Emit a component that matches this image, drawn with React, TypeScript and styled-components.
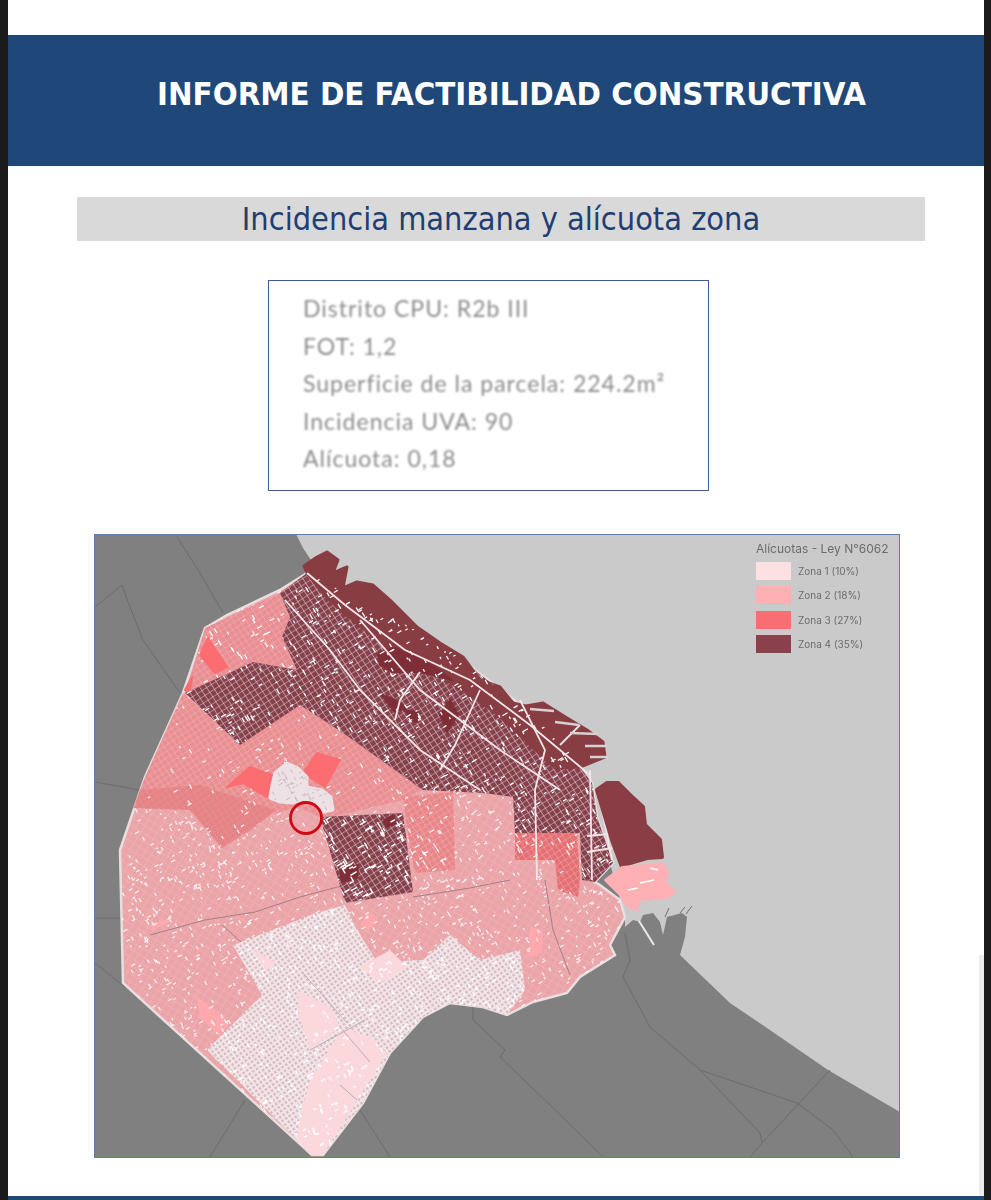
import styled, { createGlobalStyle } from "styled-components";

const GlobalStyle = createGlobalStyle`
  html, body {
    margin: 0;
    padding: 0;
    background: #1b1b1b;
  }
`;

const Sheet = styled.div`
  position: relative;
  margin: 0 7px 0 8px;
  width: 976px;
  height: 1200px;
  background: #fff;
  padding-top: 35px;
  box-sizing: border-box;
  overflow: hidden;
`;

const Banner = styled.header`
  height: 131px;
  background: #1f4778;
  display: flex;
  align-items: center;
  padding-left: 149px;
  padding-bottom: 13px;
  box-sizing: border-box;
`;

const Title = styled.h1`
  margin: 0;
  font-family: "DejaVu Sans", sans-serif;
  font-stretch: condensed;
  font-size: 32.7px;
  font-weight: 700;
  color: #fff;
  white-space: nowrap;
`;

const SectionBar = styled.div`
  margin: 31px 59px 0 69px;
  height: 44px;
  background: #d9d9d9;
  display: flex;
  align-items: center;
  justify-content: center;
`;

const SectionTitle = styled.h2`
  margin: 0;
  font-family: "DejaVu Sans", sans-serif;
  font-stretch: condensed;
  font-size: 32.2px;
  font-weight: 400;
  color: #1f3f73;
  white-space: nowrap;
`;

const InfoBox = styled.div`
  margin: 39px 0 0 260px;
  width: 441px;
  height: 211px;
  box-sizing: border-box;
  border: 1.5px solid #3d5c88;
  padding: 9px 0 0 34px;
`;

const InfoLine = styled.div`
  height: 37.5px;
  line-height: 37.5px;
  font-family: Lato, sans-serif;
  font-size: 23px;
  letter-spacing: 1px;
  color: #8c8c8c;
  filter: blur(0.8px);
  white-space: nowrap;
`;

const MapFrame = styled.figure`
  position: relative;
  margin: 43px 0 0 86px;
  width: 806px;
  height: 624px;
  box-sizing: border-box;
  border: 1px solid #5f7ea6;
  background: #cacaca;
  overflow: hidden;
`;

const MapSvg = styled.svg`
  display: block;
  width: 806px;
  height: 624px;
  margin: -1px;
`;

const Legend = styled.div`
  position: absolute;
  top: 7px;
  right: 7px;
  width: 136px;
  filter: blur(0.4px);
  font-family: Inter, sans-serif;
  color: #6c6c6c;
`;

const LegendTitle = styled.div`
  font-size: 12px;
  line-height: 14px;
  margin-bottom: 3px;
  white-space: nowrap;
`;

const LegendRow = styled.div`
  display: flex;
  align-items: center;
  gap: 7px;
  height: 24.3px;
  font-size: 10px;
  white-space: nowrap;
`;

const Swatch = styled.span<{ $color: string }>`
  flex: none;
  width: 35px;
  height: 18px;
  background: ${(p) => p.$color};
`;

const ScrollEdge = styled.div`
  position: absolute;
  top: 955px;
  right: 0;
  width: 5px;
  bottom: 0;
  background: #ececec;
`;

const BottomStrip = styled.div`
  position: absolute;
  left: 0;
  right: 0;
  bottom: 0;
  height: 4px;
  background: #1f4778;
`;

type Pt = [number, number];

const toPoints = (pts: Pt[]) => pts.map((p) => p.join(",")).join(" ");

// simple seeded random so the specks stay the same between renders
const makeRandom = (seed: number) => () => {
  seed = (seed * 1664525 + 1013904223) % 4294967296;
  return seed / 4294967296;
};

const makeSpecks = (pts: Pt[], count: number, seed: number, lenMin: number, lenMax: number) => {
  const rnd = makeRandom(seed);
  const xs = pts.map((p) => p[0]);
  const ys = pts.map((p) => p[1]);
  const x0 = Math.min(...xs);
  const y0 = Math.min(...ys);
  const w = Math.max(...xs) - x0;
  const h = Math.max(...ys) - y0;
  let d = "";
  for (let i = 0; i < count; i++) {
    const x = x0 + rnd() * w;
    const y = y0 + rnd() * h;
    const len = lenMin + rnd() * (lenMax - lenMin);
    const horizontal = rnd() > 0.5;
    const dx = horizontal ? len * 0.85 : len * 0.5;
    const dy = horizontal ? -len * 0.5 : len * 0.85;
    d += `M${x.toFixed(1)} ${y.toFixed(1)}l${dx.toFixed(1)} ${dy.toFixed(1)}`;
  }
  return d;
};

const LAND: Pt[] = [
  [94, 534], [296, 534], [303, 548], [311, 560], [307, 573], [330, 760], [597, 817], [625, 917],
  [625, 927], [633, 920], [640, 922], [643, 915], [653, 913], [660, 922], [663, 935], [667, 917],
  [682, 913], [687, 917], [685, 937], [680, 955], [730, 1003], [767, 1028], [828, 1070], [900, 1112],
  [900, 1158], [94, 1158],
];

const CITY: Pt[] = [
  [307, 573], [280, 590], [227, 615], [205, 628], [183, 693], [145, 777], [120, 850], [123, 983],
  [312, 1155], [323, 1155], [363, 1103], [390, 1053], [423, 1017], [450, 1003], [483, 1007], [507, 1015],
  [533, 1002], [567, 993], [580, 977], [615, 955], [610, 945], [625, 917], [620, 900], [600, 885],
  [595, 882], [613, 863], [597, 817], [592, 783], [580, 767], [540, 720], [440, 643], [340, 590],
];

const ZONE_1: Pt[] = [
  [207, 1050], [262, 995], [233, 945], [317, 913], [345, 905], [357, 930], [377, 962], [423, 960],
  [450, 935], [480, 960], [520, 950], [525, 990], [507, 1015], [483, 1007], [450, 1003], [423, 1017],
  [390, 1053], [363, 1103], [323, 1155], [312, 1155],
];

const ZONE_3_WEST: Pt[] = [
  [183, 693], [240, 745], [300, 705], [343, 733], [423, 790], [403, 800], [340, 815], [320, 817],
  [297, 807], [270, 815], [222, 848], [190, 810], [133, 808], [145, 777],
];

const ZONE_3_STRIP: Pt[] = [
  [140, 790], [200, 785], [275, 810], [255, 828], [222, 848], [190, 810], [135, 808],
];

const ZONE_NW: Pt[] = [
  [205, 628], [280, 593], [290, 617], [282, 637], [297, 670], [273, 685], [253, 662], [185, 693],
];

const ZONE_4: Pt[] = [
  [307, 573], [280, 593], [290, 617], [282, 637], [297, 670], [253, 662], [185, 693], [240, 745],
  [300, 705], [343, 733], [423, 790], [483, 793], [513, 797], [515, 833], [580, 833], [582, 880],
  [595, 882], [613, 863], [597, 817], [592, 783], [580, 767], [560, 740], [500, 690], [440, 643],
  [340, 590],
];

const ZONE_4_CENTER: Pt[] = [[320, 817], [403, 813], [413, 892], [345, 903]];

const ZONE_3_MID: Pt[] = [[403, 797], [453, 792], [455, 870], [415, 873], [408, 835]];

const ZONE_3_EAST: Pt[] = [
  [515, 833], [577, 833], [580, 880], [578, 897], [558, 890], [555, 860], [515, 860],
];

const COAST_SOLID: Pt[] = [
  [307, 573], [304, 566], [317, 557], [327, 552], [338, 560], [333, 573], [347, 567], [343, 588],
  [357, 582], [373, 585], [390, 600], [403, 613], [417, 627], [440, 643], [463, 657], [480, 680],
  [500, 687], [513, 703], [526, 706], [543, 703], [567, 718], [587, 730], [603, 742], [605, 757],
  [580, 767], [555, 768], [525, 740], [495, 712], [462, 690], [435, 672], [400, 660], [368, 632],
  [340, 610], [325, 595],
];

const SOLID_PATCHES: Pt[][] = [
  [[378, 653], [395, 648], [432, 665], [452, 680], [420, 672], [392, 672], [380, 665]],
  [[382, 695], [395, 700], [406, 708], [395, 712]],
  [[405, 710], [418, 712], [417, 722], [410, 720]],
  [[440, 715], [450, 700], [458, 715], [447, 732]],
  [[340, 870], [358, 865], [357, 878], [342, 882]],
  [[384, 820], [393, 815], [396, 823], [386, 827]],
];

const RESERVE: Pt[] = [
  [597, 790], [607, 783], [618, 783], [630, 795], [643, 807], [645, 825], [660, 840], [662, 857], [647, 858],
  [630, 863], [622, 867], [612, 840],
];

const PORT_ZONE_2: Pt[] = [
  [605, 880], [622, 867], [647, 865], [663, 863], [668, 873], [665, 882], [675, 892], [667, 898],
  [640, 900], [637, 910], [628, 907], [620, 895],
];

const BRIGHT_PATCHES: Pt[][] = [
  [[208, 638], [227, 667], [215, 673], [200, 655]],
  [[185, 690], [192, 677], [190, 692]],
  [[317, 753], [340, 760], [325, 787], [303, 773]],
  [[227, 787], [250, 767], [272, 775], [267, 797], [243, 783]],
];

const LIGHT_PATCHES: Pt[][] = [
  [[197, 997], [230, 1023], [220, 1037], [200, 1017]],
  [[150, 925], [173, 917], [170, 922], [153, 930]],
  [[530, 927], [543, 930], [542, 953], [528, 957]],
  [[367, 912], [378, 918], [368, 930], [360, 925]],
];

const PALE_BLOB: Pt[] = [
  [287, 763], [298, 768], [307, 777], [307, 787], [322, 790], [331, 797], [333, 810], [324, 812],
  [316, 802], [304, 799], [292, 803], [280, 802], [270, 798], [272, 785], [275, 773],
];

const BOUNDARIES: Pt[][] = [
  [[177, 537], [200, 573], [223, 613]],
  [[95, 607], [122, 585], [128, 602], [143, 640], [180, 693]],
  [[95, 782], [140, 790]],
  [[95, 918], [122, 918]],
  [[95, 963], [125, 987]],
  [[245, 1100], [210, 1157]],
  [[358, 1107], [390, 1157]],
  [[473, 1007], [473, 1020], [505, 1050], [500, 1057], [550, 1105], [603, 1157]],
  [[625, 933], [630, 960], [623, 977], [650, 1027], [700, 1070], [797, 1103], [833, 1130], [853, 1157]],
  [[700, 1070], [760, 1133], [762, 1143], [750, 1157]],
  [[830, 1070], [762, 1143]],
];

const AVENUES: Pt[][] = [
  [[307, 573], [345, 605], [405, 650], [470, 680], [530, 725], [590, 775]],
  [[360, 620], [420, 690], [500, 750], [560, 790]],
  [[520, 700], [545, 750], [535, 790], [537, 880]],
  [[285, 600], [330, 650], [360, 690], [420, 750], [480, 790]],
  [[590, 770], [592, 880]],
  [[600, 800], [612, 860]],
  [[560, 745], [580, 725]],
  [[480, 690], [455, 745], [440, 770]],
  [[420, 672], [400, 700], [395, 720]],
  [[587, 836], [610, 834]],
  [[587, 852], [612, 848]],
];

const RAILS: Pt[][] = [
  [[150, 935], [205, 920], [255, 912], [300, 897], [345, 885]],
  [[413, 897], [470, 888], [510, 880]],
  [[222, 925], [250, 950], [262, 958]],
  [[545, 880], [553, 930], [570, 975]],
];

const PARKS: Pt[][] = [
  [[297, 1137], [310, 1155], [323, 1155], [387, 1053], [370, 1037], [340, 1027], [337, 1037], [310, 1080], [300, 1117]],
  [[297, 990], [330, 1007], [340, 1027], [310, 1050], [300, 1017]],
  [[360, 967], [390, 950], [407, 967], [380, 983]],
  [[253, 950], [277, 963], [267, 970]],
];

const ZONE_1_LINES: Pt[][] = [
  [[303, 973], [347, 1023]],
  [[310, 1050], [365, 1020]],
  [[357, 1100], [340, 1085]],
  [[340, 1027], [370, 1062]],
];

const ZONE_2_SPECKS = makeSpecks(CITY, 3600, 11, 2, 4.5);
const ZONE_4_SPECKS = makeSpecks(ZONE_4, 1300, 23, 2, 6);
const CENTER_SPECKS = makeSpecks(ZONE_4_CENTER, 130, 37, 3, 8);
const WEST_SPECKS = makeSpecks(ZONE_3_WEST, 190, 51, 2, 5);
const NW_SPECKS = makeSpecks(ZONE_NW, 80, 67, 3, 6);
const ZONE_1_SPECKS = makeSpecks(ZONE_1, 800, 71, 2, 5);
const MID_SPECKS = makeSpecks(ZONE_3_MID, 45, 91, 3, 6) + makeSpecks(ZONE_3_EAST, 30, 97, 3, 6);
const BLOB_SPECKS = makeSpecks(PALE_BLOB, 90, 101, 2, 6);

const LEGEND = [
  { label: "Zona 1 (10%)", color: "#fde0e1" },
  { label: "Zona 2 (18%)", color: "#ffb0b2" },
  { label: "Zona 3 (27%)", color: "#f96e72" },
  { label: "Zona 4 (35%)", color: "#8b414b" },
];

const INFO = [
  "Distrito CPU: R2b III",
  "FOT: 1,2",
  "Superficie de la parcela: 224.2m²",
  "Incidencia UVA: 90",
  "Alícuota: 0,18",
];

const CityMap = () => (
  <MapSvg viewBox="94 534 806 624">
    <defs>
      <pattern id="gridDark" width="5.6" height="5.6" patternUnits="userSpaceOnUse" patternTransform="rotate(-33)">
        <path d="M0 0H5.6M0 0V5.6" stroke="#ecd0d4" strokeWidth="1.1" fill="none" />
      </pattern>
      <pattern id="gridPink" width="5.5" height="5.5" patternUnits="userSpaceOnUse" patternTransform="rotate(-33)">
        <path d="M0 0H5.5M0 0V5.5" stroke="#f4bcbf" strokeWidth="0.7" fill="none" />
      </pattern>
      <pattern id="gridFaint" width="7" height="7" patternUnits="userSpaceOnUse" patternTransform="rotate(32)">
        <path d="M0 0H7M0 0V7" stroke="#f3c8cb" strokeWidth="0.5" fill="none" />
      </pattern>
      <pattern id="gridGrey" width="4.4" height="4.4" patternUnits="userSpaceOnUse" patternTransform="rotate(-35)">
        <rect width="4.4" height="4.4" fill="#f7e4e7" />
        <rect x="1" y="1" width="2.4" height="2.4" fill="#cdbcc0" />
      </pattern>
      <clipPath id="clipCity"><polygon points={toPoints(CITY)} /></clipPath>
      <clipPath id="clipZone4"><polygon points={toPoints(ZONE_4)} /></clipPath>
      <clipPath id="clipCenter"><polygon points={toPoints(ZONE_4_CENTER)} /></clipPath>
      <clipPath id="clipWest"><polygon points={toPoints(ZONE_3_WEST)} /></clipPath>
      <clipPath id="clipNw"><polygon points={toPoints(ZONE_NW)} /></clipPath>
      <clipPath id="clipOne"><polygon points={toPoints(ZONE_1)} /></clipPath>
      <clipPath id="clipBlob"><polygon points={toPoints(PALE_BLOB)} /></clipPath>
      <clipPath id="clipMid">
        <polygon points={toPoints(ZONE_3_MID)} />
        <polygon points={toPoints(ZONE_3_EAST)} />
      </clipPath>
      <filter id="soft"><feGaussianBlur stdDeviation="0.5" /></filter>
    </defs>

    <rect x="94" y="534" width="806" height="624" fill="#cacaca" />
    <polygon points={toPoints(LAND)} fill="#808080" />
    {BOUNDARIES.map((line, i) => (
      <polyline key={i} points={toPoints(line)} fill="none" stroke="#6c6c6c" strokeWidth="1" />
    ))}

    <g filter="url(#soft)">
      <polygon points={toPoints(CITY)} fill="#eba5a9" stroke="#e9dfe1" strokeWidth="2.5" />
      <polygon points={toPoints(CITY)} fill="url(#gridFaint)" />
      {LIGHT_PATCHES.map((p, i) => (
        <polygon key={i} points={toPoints(p)} fill="#ffa9ae" />
      ))}
      <path d={ZONE_2_SPECKS} clipPath="url(#clipCity)" stroke="#fff" strokeWidth="1.2" opacity="0.9" fill="none" />
      {RAILS.map((line, i) => (
        <polyline key={i} points={toPoints(line)} fill="none" stroke="#a67f84" strokeWidth="1" />
      ))}

      <polygon points={toPoints(ZONE_1)} fill="url(#gridGrey)" />
      {PARKS.map((p, i) => (
        <polygon key={i} points={toPoints(p)} fill="#fbd8dc" />
      ))}
      <path d={ZONE_1_SPECKS} clipPath="url(#clipOne)" stroke="#fff" strokeWidth="1.5" fill="none" />
      {ZONE_1_LINES.map((line, i) => (
        <polyline key={i} points={toPoints(line)} fill="none" stroke="#b9a6aa" strokeWidth="0.9" />
      ))}

      <polygon points={toPoints(ZONE_NW)} fill="#e98e92" />
      <polygon points={toPoints(ZONE_NW)} fill="url(#gridPink)" />
      <path d={NW_SPECKS} clipPath="url(#clipNw)" stroke="#fff" strokeWidth="1.3" fill="none" />

      <polygon points={toPoints(ZONE_3_WEST)} fill="#e98f92" />
      <polygon points={toPoints(ZONE_3_WEST)} fill="url(#gridPink)" />
      <polygon points={toPoints(ZONE_3_STRIP)} fill="#e27a7e" opacity="0.55" />
      <path d={WEST_SPECKS} clipPath="url(#clipWest)" stroke="#fff" strokeWidth="1.2" fill="none" />

      <polygon points={toPoints(ZONE_3_MID)} fill="#e88689" />
      <polygon points={toPoints(ZONE_3_EAST)} fill="#e46f73" />
      <polygon points={toPoints(ZONE_3_MID)} fill="url(#gridPink)" />
      <polygon points={toPoints(ZONE_3_EAST)} fill="url(#gridPink)" />
      <path d={MID_SPECKS} clipPath="url(#clipMid)" stroke="#fff" strokeWidth="1.2" fill="none" />

      {BRIGHT_PATCHES.map((p, i) => (
        <polygon key={i} points={toPoints(p)} fill="#fb6d71" stroke="#fb6d71" strokeWidth="2" strokeLinejoin="round" />
      ))}
      <polygon points={toPoints(PALE_BLOB)} fill="#ece2e5" stroke="#ece2e5" strokeWidth="3" strokeLinejoin="round" />
      <path d={BLOB_SPECKS} clipPath="url(#clipBlob)" stroke="#c9b3b8" strokeWidth="0.9" fill="none" />

      <polygon points={toPoints(ZONE_4)} fill="#84404b" />
      <polygon points={toPoints(ZONE_4)} fill="url(#gridDark)" />
      <polygon points={toPoints(ZONE_4_CENTER)} fill="#84404b" />
      <polygon points={toPoints(ZONE_4_CENTER)} fill="url(#gridDark)" />
      <polygon points={toPoints(COAST_SOLID)} fill="#883c43" stroke="#883c43" strokeWidth="3" strokeLinejoin="round" />
      {SOLID_PATCHES.map((p, i) => (
        <polygon key={i} points={toPoints(p)} fill="#7f2f38" stroke="#7f2f38" strokeWidth="2" strokeLinejoin="round" />
      ))}
      <path d={ZONE_4_SPECKS} clipPath="url(#clipZone4)" stroke="#fff" strokeWidth="1.3" fill="none" />
      <path d={CENTER_SPECKS} clipPath="url(#clipCenter)" stroke="#fff" strokeWidth="1.4" fill="none" />
      {AVENUES.map((line, i) => (
        <polyline key={i} points={toPoints(line)} fill="none" stroke="#f3e6e8" strokeWidth="1.8" />
      ))}
      <path
        d="M530 709l24 2M555 722l24 3M570 733l28 1M585 746l22 0M590 757l18 0"
        stroke="#d6d0d0"
        strokeWidth="2.4"
        fill="none"
      />

      <polygon points={toPoints(RESERVE)} fill="#8b3d44" stroke="#8b3d44" strokeWidth="4" strokeLinejoin="round" />
      <polygon points={toPoints(PORT_ZONE_2)} fill="#ffb0b5" stroke="#ffb0b5" strokeWidth="2" strokeLinejoin="round" />
      <path d="M640 883l14 -3M628 890l10 -2M650 868l8 2" stroke="#fff" strokeWidth="1.4" fill="none" />
      <path d="M665 917l4 -9M686 914l6 -8M680 913l5 -6" stroke="#6f6f6f" strokeWidth="1" fill="none" />
      <path d="M639 921l15 24" stroke="#e8e8e8" strokeWidth="2" fill="none" />
    </g>

    <circle cx="306" cy="818" r="15.5" fill="none" stroke="#cb0a16" strokeWidth="2.8" />
  </MapSvg>
);

export default function App() {
  return (
    <>
      <GlobalStyle />
      <Sheet>
        <Banner>
          <Title>INFORME DE FACTIBILIDAD CONSTRUCTIVA</Title>
        </Banner>
        <SectionBar>
          <SectionTitle>Incidencia manzana y alícuota zona</SectionTitle>
        </SectionBar>
        <InfoBox>
          {INFO.map((line) => (
            <InfoLine key={line}>{line}</InfoLine>
          ))}
        </InfoBox>
        <MapFrame>
          <CityMap />
          <Legend>
            <LegendTitle>Alícuotas - Ley N°6062</LegendTitle>
            {LEGEND.map((row) => (
              <LegendRow key={row.label}>
                <Swatch $color={row.color} />
                {row.label}
              </LegendRow>
            ))}
          </Legend>
        </MapFrame>
        <ScrollEdge />
        <BottomStrip />
      </Sheet>
    </>
  );
}
